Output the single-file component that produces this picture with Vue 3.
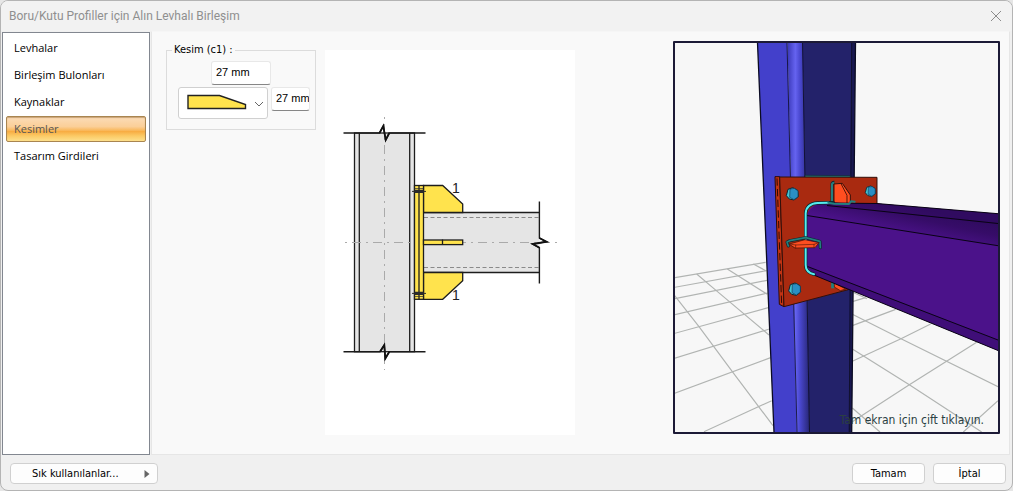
<script setup>
import { ref } from 'vue'

const sections = ['Levhalar', 'Birleşim Bulonları', 'Kaynaklar', 'Kesimler', 'Tasarım Girdileri']
const active = ref('Kesimler')
const cutLength = ref('27 mm')
const cutHeight = ref('27 mm')
const cutShape = ref('chamfer')

const floorLeft = [
  'M2 68L275 22', 'M2 97L278 47', 'M2 131L279 76', 'M2 179L281 114', 'M2 235L283 158',
  'M2 310L286 222', 'M2 415L290 308', 'M90 530L293 437',
  'M2 122L75 215L175 350L297 512', 'M68 57L126 106L285 240', 'M160 42L280 118', 'M238 27L275 47'
]
const floorRight = [
  'M22 103L168 176L459 320', 'M22 207L193 314L410 456', 'M22 384L105 456',
  'M22 65L62 53', 'M22 137L152 88', 'M22 244L168 176L257 132', 'M22 425L193 314L395 187', 'M355 456L459 362',
  'M22 36L66 56'
]
const bolts = [[83, 87, 1], [317, 79, 0.85], [90, 373, 1]]
</script>

<template>
  <div class="dialog">
    <header class="titlebar">
      <h1>Boru/Kutu Profiller için Alın Levhalı Birleşim</h1>
      <button class="close" type="button" aria-label="Kapat">
        <svg width="12" height="12" viewBox="0 0 12 12"><path d="M1 1L11 11M11 1L1 11" stroke="#8c8c8c" fill="none" /></svg>
      </button>
    </header>

    <div class="body">
      <nav class="sidebar">
        <button
          v-for="s in sections"
          :key="s"
          type="button"
          class="item"
          :class="{ active: s === active }"
          @click="active = s"
        >{{ s }}</button>
      </nav>

      <main class="panel">
        <fieldset class="group">
          <legend>Kesim (c1) :</legend>
          <input v-model="cutLength" class="field top" type="text" aria-label="Kesim uzunluğu" />
          <div class="row">
            <div class="shape">
              <select v-model="cutShape" aria-label="Kesim şekli">
                <option value="chamfer" aria-label="Pahlı"></option>
              </select>
              <svg class="shape-art" width="60" height="16" viewBox="0 0 60 16">
                <path d="M1 1.500H32.500L58.500 10.500V14.500H1Z" fill="#ffe34d" stroke="#222" stroke-width="1.400" />
              </svg>
              <svg class="chevron" width="10" height="6" viewBox="0 0 10 6">
                <path d="M1 1L5 5L9 1" fill="none" stroke="#666" />
              </svg>
            </div>
            <input v-model="cutHeight" class="field side" type="text" aria-label="Kesim yüksekliği" />
          </div>
        </fieldset>

        <div class="diagram">
          <svg viewBox="325 50 250 385">
            <g fill="#e5e5e5" stroke="#1d1d1d" stroke-width="1.300">
              <rect x="354.500" y="133" width="60" height="218.700" />
              <path d="M359.300 133V351.700M409.700 133V351.700" />
              <path d="M424 212.500H539.500V272.500H424Z" stroke="none" />
              <path d="M424 212.500H539.500M424 272.500H539.500" />
            </g>
            <path d="M384.500 115V370" stroke="#aaa" stroke-dasharray="9 5 2 5" stroke-dashoffset="12" fill="none" />
            <path d="M343 242.500H557" stroke="#aaa" stroke-dasharray="9 5 2 5" stroke-dashoffset="12" fill="none" />
            <path d="M424 217.500H539M424 267.500H539" stroke="#8a8a8a" stroke-dasharray="4 2.500" fill="none" />
            <g fill="#ffe34d" stroke="#1d1d1d" stroke-width="1.300">
              <path d="M423.500 185.500H442.700L462.700 204V212.500H423.500Z" />
              <path d="M423.500 272.500H462.700V280.700L442.700 299.300H423.500Z" />
              <rect x="414.500" y="185.500" width="9" height="113.800" />
              <path d="M419 185.500V299.300" />
              <rect x="423.500" y="240" width="39.200" height="4.600" />
              <path d="M442.500 239.500V245" />
            </g>
            <g fill="none" stroke="#2b2b2b">
              <path d="M412 191.400H426M412 293.400H426" />
              <path d="M414.500 191.400H423.500M414.500 293.400H423.500" stroke-width="3.400" />
              <path d="M414.500 188.500H423.500M414.500 296.500H423.500" stroke-width=".7" />
            </g>
            <g fill="none" stroke="#1a1a1a" stroke-width="1.400">
              <path d="M343.500 133H379.500L383.300 126L385.700 140L389.300 133H425.500" />
              <path d="M343.500 351.700H380L384.300 345L385.300 358.500L389.300 351.700H425.500" />
              <path d="M539.400 201.500V238L546.500 241.700L532.700 244L539.400 247.700V283.500" />
            </g>
            <path
              d="M379.500 133L383.300 126L385.700 140L389.300 133M380 351.700L384.300 345L385.300 358.500L389.300 351.700M539.400 238L546.500 241.700L532.700 244L539.400 247.700"
              fill="none" stroke="#111" stroke-width="1.800"
            />
            <text x="452" y="193" class="mark">1</text>
            <text x="452" y="300" class="mark">1</text>
          </svg>
        </div>

        <div class="viewer">
          <svg viewBox="675 43 323 389">
            <defs>
              <linearGradient id="bend" x1="0" x2="1" y1="0" y2="0">
                <stop offset="0" stop-color="#3a38b8" />
                <stop offset=".35" stop-color="#6563f0" />
                <stop offset=".55" stop-color="#4a48d0" />
                <stop offset="1" stop-color="#25246f" />
              </linearGradient>
              <linearGradient id="beamTop" gradientUnits="userSpaceOnUse" x1="916" y1="208" x2="910" y2="236">
                <stop offset="0" stop-color="#300b60" />
                <stop offset=".35" stop-color="#360c68" />
                <stop offset="1" stop-color="#4b128a" />
              </linearGradient>
            </defs>
            <g fill="none" stroke="#b1b4b2" stroke-width="3.500">
              <g transform="translate(674 255) scale(.33333)"><path v-for="d in floorLeft" :key="d" :d="d" /></g>
              <g transform="translate(845 280) scale(.33333)"><path v-for="d in floorRight" :key="d" :d="d" /></g>
            </g>

            <path d="M757.500 43H787.500L797 432H774Z" fill="#4340cb" />
            <path d="M787.500 43H803L810 432H796.500Z" fill="url(#bend)" />
            <path d="M802.500 43H852L849.500 432H809.500Z" fill="#23226a" />
            <path d="M851.500 43H855.500L851.700 432H849Z" fill="#191850" />
            <g fill="none" stroke="#0b0b22">
              <path d="M757.500 43L774 432M855.500 43L851.700 432" stroke-width="1.300" />
              <path d="M787 43L797 432M802.500 43L809.500 432M851.700 43L849.200 432" stroke-width=".8" />
            </g>

            <g transform="translate(765 165) scale(.33333)" stroke-linejoin="round">
              <path d="M120 31L256 32V40L120 38Z" fill="#23807f" stroke="#123" stroke-width="2" />
              <path d="M30 35L44 35L57 425L43 418Z" fill="#c23313" stroke="#2a0a05" stroke-width="3" />
              <path d="M36 40L50 420" stroke="#2a0a05" stroke-width="3" stroke-dasharray="22 10" fill="none" />
              <path d="M44 36L336 37V150L250 374L57 425Z" fill="#a92a10" stroke="#32100a" stroke-width="3" />
              <g v-for="b in bolts" :key="b[0]" :transform="`translate(${b[0]} ${b[1]}) scale(${b[2]})`">
                <path d="M-14 -14L0 -19L15 -11L17 8L4 18L-10 15L-19 5Z" fill="#43c5d5" stroke="#0c2430" stroke-width="3" />
                <path d="M-8 -15L5 -17L16 -9L16 8L4 17L-9 10Z" fill="#2a8fc4" stroke="#123a50" stroke-width="2" />
              </g>
              <path d="M201 110V58Q201 52 208 52" fill="none" stroke="#123" stroke-width="9" />
              <path d="M201 110V58Q201 53 208 53" fill="none" stroke="#23807f" stroke-width="6" />
              <path d="M207 57L232 55L256 90V118L207 114Z" fill="#ff4e20" stroke="#33100a" stroke-width="3" />
              <path d="M228 56L246 91V116" fill="none" stroke="#51170a" stroke-width="3" />
              <path d="M203 347V370" stroke="#23807f" stroke-width="9" fill="none" />
              <path d="M208 354L242 372L226 377L208 366Z" fill="#ff4e20" stroke="#33100a" stroke-width="2" />
            </g>

            <path d="M807 215Q810 203 826 202.500L877 203.500L998 213.700V350.500L813 274.500Q807 272 807 266Z" fill="#4b128a" />
            <path d="M822 203L877 203.500L998 213.700V245.700L807 215.500Q812 205 822 203Z" fill="url(#beamTop)" />
            <path d="M808 266.500L998 340V350.500L813 274.500Z" fill="#3f0e78" />
            <g fill="none" stroke="#090314">
              <path d="M824 203L877 203.500L998 213.700M827 205.500L998 223.500M807 215.500L998 245.700M807.500 266.500L998 340M812 274.300L998 350.500" stroke-width="1" />
            </g>

            <g transform="translate(765 165) scale(.33333)" fill="none" stroke-linecap="round" stroke-linejoin="round">
              <path d="M147 328Q122 322 122 300V145Q124 116 158 114L205 113" stroke="#0b2830" stroke-width="10" />
              <path d="M147 328Q122 322 122 300V145Q124 116 158 114L190 113" stroke="#55ecee" stroke-width="6" />
              <path d="M190 113L207 116L252 117L258 109L269 110" stroke="#23807f" stroke-width="6" />
              <path d="M70 243L66 231L74 227L122 218L165 229L166 248" stroke="#0b2830" stroke-width="9" />
              <path d="M70 243L66 231L74 227L122 218L165 229L166 248" stroke="#23807f" stroke-width="5" />
              <path d="M73 237L120 224L162 233L150 248L91 249Z" fill="#ff4e20" stroke="#33100a" stroke-width="2" />
              <path d="M73 237L92 240L147 238L162 233M92 240V249M147 238V248" stroke="#5a180a" stroke-width="2" />
            </g>
          </svg>
          <span class="hint">Tam ekran için çift tıklayın.</span>
        </div>
      </main>
    </div>

    <footer class="footer">
      <button type="button" class="btn fav">
        <span>Sık kullanılanlar...</span>
        <svg width="6" height="8" viewBox="0 0 6 8"><path d="M0.500 0L5.500 4L0.500 8Z" fill="#666" /></svg>
      </button>
      <button type="button" class="btn push">Tamam</button>
      <button type="button" class="btn">İptal</button>
    </footer>
  </div>
</template>

<style>
body {
  background: #e6e6e6;
}
</style>

<style scoped>
.dialog {
  box-sizing: border-box;
  min-height: 100vh;
  display: flex;
  flex-direction: column;
  border: 1px solid #b4b4b4;
  border-radius: 8px;
  background: #f0f0f0;
  overflow: hidden;
  font-family: "DejaVu Sans Condensed", "Noto Sans", sans-serif;
  font-size: 11px;
  color: #000;
}
button, input, select {
  font: inherit;
  color: inherit;
  margin: 0;
}
.titlebar {
  height: 30px;
  display: flex;
  align-items: center;
  justify-content: space-between;
  padding: 0 10px 0 8px;
  background: #f2f2f2;
}
h1 {
  margin: 0;
  font: 12px/16px Roboto, "Noto Sans", sans-serif;
  color: #8f8f8f;
}
.close {
  display: flex;
  padding: 0;
  border: 0;
  background: none;
}
.body {
  flex: 1;
  display: flex;
  gap: 1px;
  padding: 0 2px 0 1px;
}
.sidebar {
  flex: 0 0 148px;
  box-sizing: border-box;
  display: flex;
  flex-direction: column;
  gap: 1px;
  margin-top: 1px;
  padding: 2px 3px;
  border: 1px solid #828790;
  background: #fff;
}
.item {
  height: 26px;
  padding: 0 7px 2px;
  border: 1px solid transparent;
  border-radius: 2px;
  background: none;
  text-align: left;
  font-family: "Open Sans", "Noto Sans", sans-serif;
}
.item.active {
  border-color: #a98550;
  background: linear-gradient(#fbdcb8 0%, #fbcf98 40%, #f9b85c 56%, #f8ac42 60%, #fbc964 78%, #fde08c 100%);
  box-shadow: inset 0 1px 1px #c9a477;
  color: #555;
}
.panel {
  flex: 1;
  display: flex;
  align-items: flex-start;
  padding: 9px 9px 19px 14px;
  border: 1px solid #e6e6e6;
  border-top-color: #f6f6f6;
  background: #f9f9f9;
}
.group {
  flex: 0 0 150px;
  min-width: 0;
  box-sizing: border-box;
  margin: 1px 9px 0 0;
  padding: 3px 5px 10px 11px;
  border: 1px solid #dcdcdc;
}
legend {
  margin-left: -6px;
  padding: 0 2px;
  line-height: 16px;
}
.field {
  display: block;
  box-sizing: border-box;
  height: 24px;
  padding: 0 0 2px 4px;
  border: 1px solid #e8e8e8;
  border-bottom-color: #868686;
  border-radius: 3px;
  background: #fff;
  font-family: "Liberation Sans", Arial, sans-serif;
}
.top {
  width: 60px;
  margin-left: 33px;
}
.row {
  display: flex;
  align-items: flex-start;
  gap: 3px;
  margin-top: 2px;
}
.side {
  flex: 1;
  width: 0;
  min-width: 0;
}
.shape {
  flex: 0 0 90px;
  position: relative;
}
.shape select {
  display: block;
  width: 100%;
  height: 32px;
  appearance: none;
  border: 1px solid #d0d0d0;
  border-radius: 3px;
  background: #fff;
}
.shape-art, .chevron {
  position: absolute;
  pointer-events: none;
}
.shape-art {
  left: 9px;
  top: 7px;
}
.chevron {
  right: 4px;
  top: 14px;
}
.diagram {
  flex: 0 1 250px;
  margin-top: 9px;
  background: #fff;
}
.diagram svg, .viewer svg {
  display: block;
  width: 100%;
  height: auto;
}
.mark {
  font: 14px "Liberation Sans", Arial, sans-serif;
  fill: #222;
}
.viewer {
  position: relative;
  flex: 0 1 323px;
  margin-left: auto;
  border: 2px solid #1c1a36;
  border-radius: 1px;
  background: #f7f7f7;
}
.hint {
  position: absolute;
  right: 14px;
  bottom: 4px;
  font-size: 12px;
  line-height: 16px;
  color: #2b3f42;
}
.footer {
  display: flex;
  gap: 8px;
  padding: 8px 6px 6px 9px;
}
.btn {
  box-sizing: border-box;
  width: 73px;
  height: 21px;
  padding: 0;
  border: 1px solid #d0d0d0;
  border-radius: 4px;
  background: #fdfdfd;
}
.fav {
  width: 148px;
  display: flex;
  align-items: center;
  justify-content: space-between;
  padding: 0 7px 0 21px;
}
.push {
  margin-left: auto;
}
</style>
